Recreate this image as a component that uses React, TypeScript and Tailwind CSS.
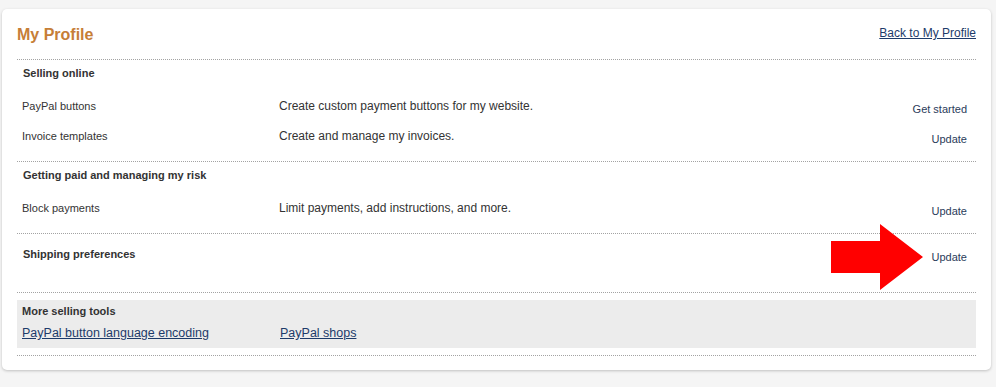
import React from "react"

const Row = ({ label, desc, action }: { label: string; desc: string; action: string }) => (
  <div className="grid h-[30px] grid-cols-[257px_1fr_auto] pl-[5px] pr-[9px]">
    <div className="pt-[3px] text-[11px] leading-[14px] text-[#333]">{label}</div>
    <div className="pt-[2px] text-[12px] leading-[16px] text-[#333]">{desc}</div>
    <a href="#" className="pt-[6px] text-[11px] leading-[14px] text-[#2a3b5a]">
      {action}
    </a>
  </div>
)

const Heading = ({ children }: { children: React.ReactNode }) => (
  <h3 className="pl-[6px] text-[11px] font-bold leading-[14px] text-[#333]">{children}</h3>
)

export default function App() {
  return (
    <div className="min-h-[387px] bg-[#f5f5f5] pt-[9px] font-['Liberation_Sans',Arial,sans-serif]">
      <div className="relative ml-[2px] w-[989px] rounded-[5px] bg-white px-[15px] pb-[14px] shadow-[0_1px_3px_rgba(0,0,0,0.22)]">
        <div className="flex h-[50px] items-start justify-between pt-[16px]">
          <h1 className="text-[16px] font-bold leading-[20px] text-[#c67e37]">My Profile</h1>
          <a href="#" className="text-[12px] leading-[16px] text-[#1d3b6a] underline">
            Back to My Profile
          </a>
        </div>

        <section className="border-t border-dotted border-[#a3a3a3] pt-[6px] pb-[5px]">
          <Heading>Selling online</Heading>
          <div className="mt-[16px]">
            <Row label="PayPal buttons" desc="Create custom payment buttons for my website." action="Get started" />
            <Row label="Invoice templates" desc="Create and manage my invoices." action="Update" />
          </div>
        </section>

        <section className="border-t border-dotted border-[#a3a3a3] pt-[6px] pb-[5px]">
          <Heading>Getting paid and managing my risk</Heading>
          <div className="mt-[16px]">
            <Row label="Block payments" desc="Limit payments, add instructions, and more." action="Update" />
          </div>
        </section>

        <section className="flex h-[59px] justify-between border-t border-dotted border-[#a3a3a3] pr-[9px]">
          <div className="pt-[13px]">
            <Heading>Shipping preferences</Heading>
          </div>
          <a href="#" className="pt-[16px] text-[11px] leading-[14px] text-[#2a3b5a]">
            Update
          </a>
        </section>

        <section className="border-t border-b border-dotted border-[#a3a3a3] py-[7px]">
          <div className="h-[48px] bg-[#ececec] px-[5px] pt-[4px]">
            <h3 className="text-[11px] font-bold leading-[14px] text-[#333]">More selling tools</h3>
            <div className="mt-[7px] grid grid-cols-[258px_1fr] text-[12.5px] leading-[16px]">
              <a href="#" className="w-fit text-[#1d3b6a] underline">
                PayPal button language encoding
              </a>
              <a href="#" className="w-fit text-[#1d3b6a] underline">
                PayPal shops
              </a>
            </div>
          </div>
        </section>

        <svg
          className="absolute left-[829px] top-[215px]"
          width="92"
          height="66"
          viewBox="0 0 92 66"
        >
          <polygon points="0,17 49,17 49,0 92,33 49,66 49,49 0,49" fill="#ff0000" />
        </svg>
      </div>
    </div>
  )
}
